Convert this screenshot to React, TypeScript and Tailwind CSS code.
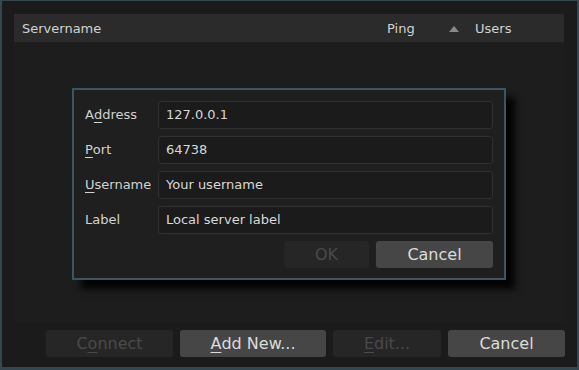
import React from "react";

// mnemonic letter, drawn the Qt way: underlined
const M = ({ c }: { c: string }) => (
  <span className="underline decoration-1 underline-offset-[3px]">{c}</span>
);

type Btn = {
  label: React.ReactNode;
  width: string;
  disabled?: boolean;
};

function Button({ label, width, disabled }: Btn) {
  return (
    <button
      type="button"
      className={
        "h-[27px] rounded-[3px] text-[16px] leading-none flex items-center justify-center " +
        width +
        (disabled
          ? " bg-[#262626] text-[#4a4a4a]"
          : " bg-[#464646] text-[#dcdcdc]")
      }
    >
      {label}
    </button>
  );
}

const fields: { label: React.ReactNode; value: string }[] = [
  { label: <>A<M c="d" />dress</>, value: "127.0.0.1" },
  { label: <><M c="P" />ort</>, value: "64738" },
  { label: <><M c="U" />sername</>, value: "Your username" },
  { label: "Label", value: "Local server label" },
];

export default function App() {
  return (
    <div className="relative w-[579px] h-[370px] bg-[#1b1b1b] border-x-2 border-b-[3px] border-t border-[#34464f] px-[12px] pt-[13px] font-['DejaVu_Sans',sans-serif] text-[13px] text-[#d2d2d2] flex flex-col">
      {/* server list */}
      <div className="w-[550px] h-[308px] flex flex-col">
        <div className="h-[28px] pt-[1px] bg-[#2b2b2b] flex items-center">
          <div className="flex-1 pl-[8px]">Servername</div>
          <div className="w-[88px] pl-[8px] flex items-center">
            <span>Ping</span>
            <svg width="10" height="6" viewBox="0 0 10 6" className="ml-auto mr-[8px]">
              <path d="M0 6 L5 0 L10 6 Z" fill="#8a8a8a" />
            </svg>
          </div>
          <div className="w-[97px] pl-[8px]">Users</div>
        </div>
        <div className="flex-1 bg-[#1d1d1d]" />
      </div>

      {/* bottom buttons */}
      <div className="mt-[8px] ml-[32px] flex gap-[7px]">
        <Button label={<>C<M c="o" />nnect</>} width="w-[127px]" disabled />
        <Button label={<><M c="A" />dd New...</>} width="w-[146px]" />
        <Button label={<><M c="E" />dit...</>} width="w-[108px]" disabled />
        <Button label="Cancel" width="w-[117px]" />
      </div>

      {/* add server dialog */}
      <div className="absolute left-[70px] top-[87px] w-[434px] h-[192px] border-2 border-[#3e5461] bg-[#1f1f1f] shadow-[9px_9px_7px_rgba(0,0,0,0.9)] px-[11px] pt-[11px] pb-[10px] flex flex-col">
        <div className="grid grid-cols-[66px_1fr] gap-x-[7px] gap-y-[7px]">
          {fields.map((f, i) => (
            <React.Fragment key={i}>
              <div className="h-[28px] flex items-center">{f.label}</div>
              <div className="h-[28px] flex items-center rounded-[3px] border border-[#303030] bg-[#1b1b1b] pl-[7px] text-[#d8d8d8]">
                {f.value}
              </div>
            </React.Fragment>
          ))}
        </div>
        <div className="mt-[7px] flex justify-end gap-[7px]">
          <Button label="OK" width="w-[85px]" disabled />
          <Button label="Cancel" width="w-[117px]" />
        </div>
      </div>
    </div>
  );
}
